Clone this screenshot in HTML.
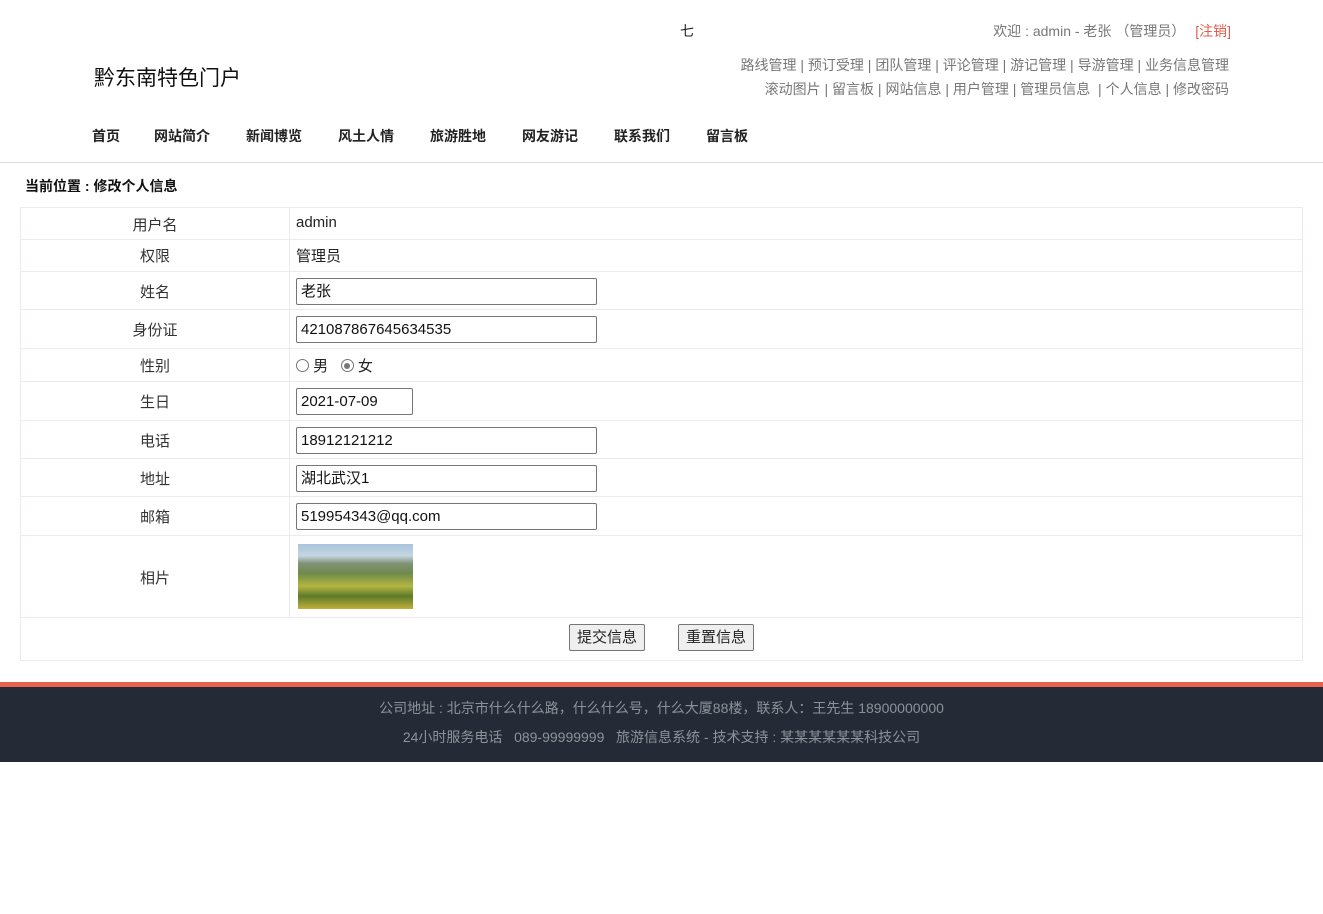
<!DOCTYPE html>
<html><head><meta charset="utf-8"><style>
*{margin:0;padding:0;box-sizing:border-box}
body{width:1323px;height:914px;background:#fff;font-family:"Liberation Sans","Microsoft YaHei","Noto Sans CJK SC",sans-serif;position:relative;overflow:hidden;color:#222}
.a{position:absolute;white-space:nowrap}
.g{color:#777;font-size:14px}
.nav span{position:absolute;font-size:14px;font-weight:bold;color:#222}
.row{position:absolute;left:20px;width:1283px;border:1px solid #f0e8ea;border-top:none}
.lab{position:absolute;left:0;width:268px;text-align:center;font-size:15px;color:#333}
.sep{position:absolute;left:268px;top:0;bottom:0;border-left:1px solid #f0e8ea}
.val{position:absolute;left:275px;font-size:15px;color:#222}
.inp{position:absolute;left:275px;height:27px;border:1px solid #767676;border-radius:2px;font-size:15px;line-height:25px;padding:0 4px;color:#111}
.btn{position:absolute;top:6px;height:27px;border:1px solid #767676;border-radius:2px;background:#efefef;font-size:15px;line-height:25px;padding:0 7px}
.rad{display:inline-block;width:13px;height:13px;border:1px solid #767676;border-radius:50%;vertical-align:-1px;position:relative}
</style></head><body>
<div class="a" style="left:680px;top:21px;font-size:14px">七</div>
<div class="a g" style="right:92px;top:21px">欢迎 : admin - 老张 （管理员） <span style="color:#e0604f;margin-left:6px">[注销]</span></div>
<div class="a g" style="right:94px;top:55px">路线管理 | 预订受理 | 团队管理 | 评论管理 | 游记管理 | 导游管理 | 业务信息管理</div>
<div class="a g" style="right:94px;top:79px">滚动图片 | 留言板 | 网站信息 | 用户管理 | 管理员信息 &nbsp;| 个人信息 | 修改密码</div>
<div class="a" style="left:94px;top:62px;font-size:21px;color:#111">黔东南特色门户</div>
<div class="nav">
<span style="left:92px;top:126px">首页</span>
<span style="left:154px;top:126px">网站简介</span>
<span style="left:246px;top:126px">新闻博览</span>
<span style="left:338px;top:126px">风土人情</span>
<span style="left:430px;top:126px">旅游胜地</span>
<span style="left:522px;top:126px">网友游记</span>
<span style="left:614px;top:126px">联系我们</span>
<span style="left:706px;top:126px">留言板</span>
</div>
<div class="a" style="left:0;top:162px;width:1323px;border-top:1px solid #ddd"></div>
<div class="a" style="left:25px;top:176px;font-size:14px;font-weight:bold;color:#111">当前位置 : 修改个人信息</div>

<div class="row" style="top:207px;height:33px;border-top:1px solid #f0e8ea"><div class="sep"></div><div class="lab" style="top:6px">用户名</div><div class="val" style="top:6px">admin</div></div>
<div class="row" style="top:240px;height:32px"><div class="sep"></div><div class="lab" style="top:5px">权限</div><div class="val" style="top:5px">管理员</div></div>
<div class="row" style="top:272px;height:38px"><div class="sep"></div><div class="lab" style="top:9px">姓名</div><div class="inp" style="top:6px;width:301px">老张</div></div>
<div class="row" style="top:310px;height:39px"><div class="sep"></div><div class="lab" style="top:9px">身份证</div><div class="inp" style="top:6px;width:301px">421087867645634535</div></div>
<div class="row" style="top:349px;height:33px"><div class="sep"></div><div class="lab" style="top:6px">性别</div><div class="val" style="top:6px"><span class="rad"></span> 男 &nbsp;&nbsp;<span class="rad"><span style="position:absolute;left:2.5px;top:2.5px;width:6px;height:6px;border-radius:50%;background:#777"></span></span> 女</div></div>
<div class="row" style="top:382px;height:39px"><div class="sep"></div><div class="lab" style="top:9px">生日</div><div class="inp" style="top:6px;width:117px">2021-07-09</div></div>
<div class="row" style="top:421px;height:38px"><div class="sep"></div><div class="lab" style="top:9px">电话</div><div class="inp" style="top:6px;width:301px">18912121212</div></div>
<div class="row" style="top:459px;height:38px"><div class="sep"></div><div class="lab" style="top:9px">地址</div><div class="inp" style="top:6px;width:301px">湖北武汉1</div></div>
<div class="row" style="top:497px;height:39px"><div class="sep"></div><div class="lab" style="top:9px">邮箱</div><div class="inp" style="top:6px;width:301px">519954343@qq.com</div></div>
<div class="row" style="top:536px;height:82px"><div class="sep"></div><div class="lab" style="top:31px">相片</div>
<div style="position:absolute;left:277px;top:8px;width:115px;height:65px;background:linear-gradient(180deg,#a9c4dc 0%,#c5d6e0 18%,#7f9278 30%,#6f8a4c 45%,#b3b640 65%,#5d7a2a 80%,#c0b03a 100%)"></div></div>
<div class="row" style="top:618px;height:43px"><div class="btn" style="left:548px">提交信息</div><div class="btn" style="left:657px">重置信息</div></div>

<div class="a" style="left:0;top:682px;width:1323px;height:5px;background:#e8604e"></div>
<div class="a" style="left:0;top:687px;width:1323px;height:75px;background:#252b36"></div>
<div class="a" style="left:0;top:698px;width:1323px;text-align:center;font-size:14px;color:#8d929a">公司地址 : 北京市什么什么路，什么什么号，什么大厦88楼，联系人：王先生 18900000000</div>
<div class="a" style="left:0;top:727px;width:1323px;text-align:center;font-size:14px;color:#8d929a">24小时服务电话 &nbsp; 089-99999999 &nbsp; 旅游信息系统 - 技术支持 : 某某某某某某科技公司</div>
</body></html>
